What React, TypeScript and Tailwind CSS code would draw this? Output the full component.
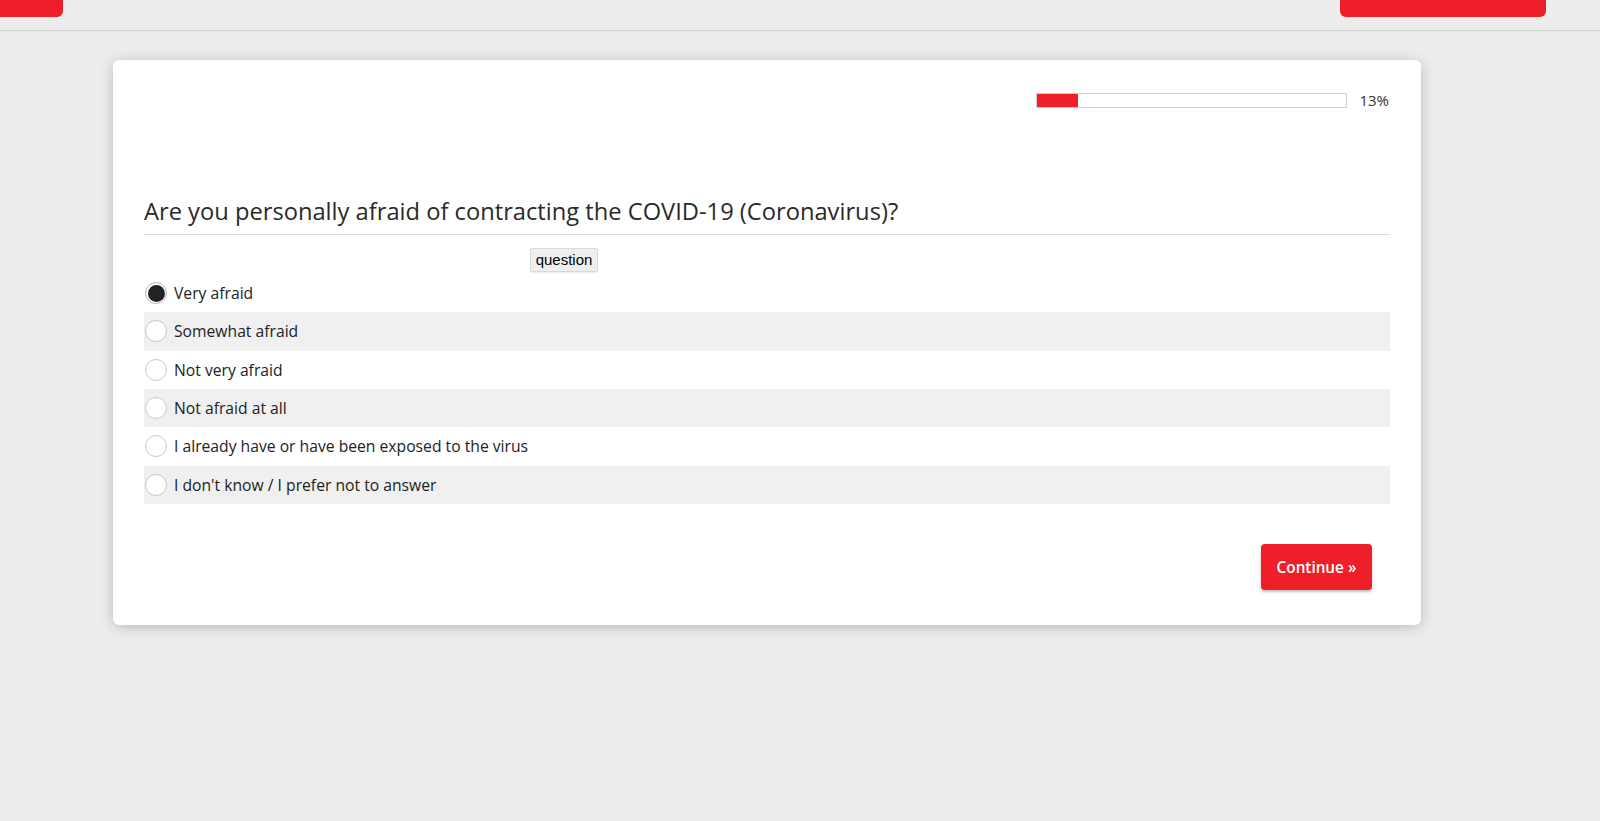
import React from "react";

const options = [
  "Very afraid",
  "Somewhat afraid",
  "Not very afraid",
  "Not afraid at all",
  "I already have or have been exposed to the virus",
  "I don't know / I prefer not to answer",
];

export default function App() {
  return (
    <div
      className="min-h-[821px] w-[1600px] bg-[#ededed] text-[#222]"
      style={{ fontFamily: '"Open Sans", "Noto Sans", sans-serif' }}
    >
      <header className="flex h-[31px] items-start justify-between border-b border-[#d4d4d4] bg-[#ededed] shadow-[0_1px_2px_rgba(0,0,0,0.04)]">
        <div className="h-[17px] w-[63px] rounded-br-[6px] bg-[#ee1f29]" />
        <div className="mr-[54px] h-[17px] w-[206px] rounded-b-[6px] bg-[#ee1f29]" />
      </header>

      <div className="ml-[113px] mt-[29px] w-[1308px] rounded-[6px] bg-white px-[31px] pb-[35px] pt-[32px] shadow-[0_2px_14px_rgba(0,0,0,0.22)]">
        <div className="flex items-center justify-end gap-[12px] pr-[1px]">
          <div className="h-[15px] w-[311px] border border-[#cfcfcf] bg-white">
            <div className="h-full w-[13%] bg-[#ee1f29]" />
          </div>
          <span className="text-[15px] leading-[16px] text-[#333]">13%</span>
        </div>

        <h1 className="mt-[88px] border-b border-[#dcdcdc] pb-[8px] text-[23.7px] leading-[30px] text-[#2a2a2a]">
          Are you personally afraid of contracting the COVID-19 (Coronavirus)?
        </h1>

        <div className="mt-[13px] flex">
          <button
            className="ml-[386px] h-[24px] w-[68px] rounded-[2px] border border-[#d8d8d8] bg-[#efefef] text-[15px] leading-[20px] text-black shadow-[0_1px_1px_rgba(0,0,0,0.08)]"
            style={{ fontFamily: '"Liberation Sans", Arial, sans-serif' }}
          >
            question
          </button>
        </div>

        <div className="mt-[2px] flex flex-col">
          {options.map((o, i) => (
            <label
              key={o}
              className={
                "flex h-[38.33px] items-center pl-[1px] " +
                (i % 2 === 1 ? "bg-[#f0f0f0]" : "bg-white")
              }
            >
              {i === 0 ? (
                <span className="flex h-[22px] w-[22px] items-center justify-center rounded-full border border-[#b5b5b5] bg-white">
                  <span className="h-[17px] w-[17px] rounded-full bg-[#222]" />
                </span>
              ) : (
                <span className="h-[22px] w-[22px] rounded-full border border-[#c9c9c9] bg-white" />
              )}
              <span className="ml-[7px] text-[15.7px] leading-[20px] text-[#222]">{o}</span>
            </label>
          ))}
        </div>

        <div className="mt-[40px] flex justify-end pr-[18px]">
          <button className="h-[46px] w-[111px] rounded-[4px] bg-[#ee1f29] text-[15.3px] font-semibold text-white shadow-[0_2px_3px_rgba(0,0,0,0.25)]">
            Continue »
          </button>
        </div>
      </div>
    </div>
  );
}
